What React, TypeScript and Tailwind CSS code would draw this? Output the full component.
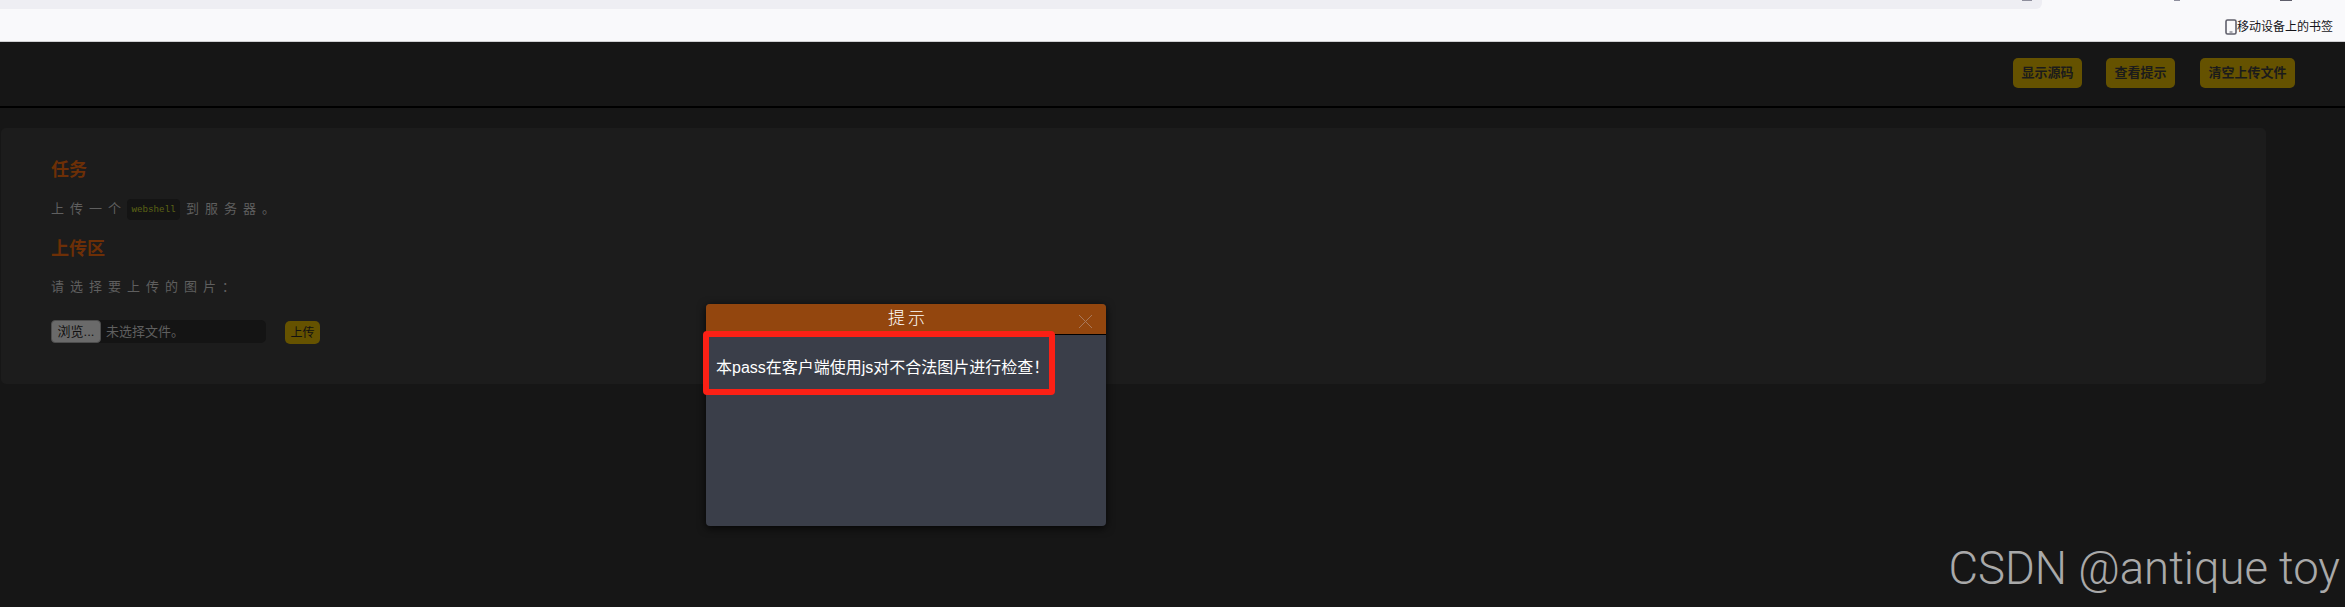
export default function App() {
  const sans = "font-['Liberation_Sans','Noto_Sans_CJK_SC',sans-serif]";

  return (
    <div className={`relative h-[607px] w-[2345px] overflow-hidden bg-[#161616] ${sans}`}>
      {/* browser chrome */}
      <div className="relative h-[42px] border-b border-[#cfcfd2] bg-[#f9f9fb]">
        <div className="h-[9px] w-[2042px] rounded-br-md bg-[#eeeef3]" />
        {/* bottoms of the toolbar icons, cut off by the crop */}
        <span className="absolute top-0 left-[2022px] h-[1px] w-[10px] bg-[#8f8f9d]" />
        <span className="absolute top-0 left-[2174px] h-[1px] w-[6px] bg-[#8f8f9d]" />
        <span className="absolute top-0 left-[2280px] h-[1px] w-[12px] bg-[#5f5f6b]" />
        <div className="mt-[10px] flex h-[16px] items-center justify-end pr-[12px]">
          <svg width="12" height="16" viewBox="0 0 12 16" fill="none">
            <rect x="1" y="1" width="10" height="14" rx="1.5" stroke="#5f5f6b" strokeWidth="1.6" />
            <rect x="4.5" y="12.5" width="3" height="1" fill="#5f5f6b" />
          </svg>
          <span className="text-[12px] leading-[16px] text-[#15141a]">移动设备上的书签</span>
        </div>
      </div>

      {/* page header */}
      <div className="flex h-[66px] items-start justify-end border-b-2 border-black pt-[16px] pr-[50px]">
        <div className="flex gap-[24px]">
          <button className="h-[30px] w-[69px] rounded-[5px] bg-[#655200] text-[13px] font-bold text-[#1b1b1b]">显示源码</button>
          <button className="h-[30px] w-[69px] rounded-[5px] bg-[#655200] text-[13px] font-bold text-[#1b1b1b]">查看提示</button>
          <button className="ml-px h-[30px] w-[95px] rounded-[5px] bg-[#655200] text-[13px] font-bold text-[#1b1b1b]">清空上传文件</button>
        </div>
      </div>

      {/* task panel */}
      <div className="mt-[20px] ml-px h-[256px] w-[2265px] rounded-[5px] bg-[#1c1c1c] pt-[31px] pl-[50px]">
        <h2 className="text-[18px] leading-[22px] font-bold text-[#6d2f06]">任务</h2>
        <p className="mt-[17px] flex h-[22px] items-center text-[13px] tracking-[6px] text-[#5f5f5f]">
          上传一个
          <code className="mr-[6px] w-[53px] rounded-[4px] bg-[#141414] py-[2px] text-center font-['Liberation_Mono',monospace] text-[9.2px] leading-[17px] tracking-normal text-[#5d6414]">webshell</code>
          到服务器。
        </p>
        <h2 className="mt-[18px] text-[18px] leading-[22px] font-bold text-[#6d2f06]">上传区</h2>
        <p className="mt-[16px] h-[22px] text-[13px] leading-[22px] tracking-[6px] text-[#5f5f5f]">请选择要上传的图片：</p>
        <div className="mt-[22px] flex items-start">
          <div className="flex h-[23px] w-[215px] items-center rounded-[5px] bg-[#141414]">
            <span className="flex h-[23px] w-[50px] items-center justify-center rounded-[4px] border border-[#4d4d4d] bg-[#6a6a6a] text-[13px] text-[#111111]">浏览...</span>
            <span className="ml-[5px] text-[13px] text-[#5f5f5f]">未选择文件。</span>
          </div>
          <button className="mt-px ml-[19px] h-[23px] w-[35px] rounded-[5px] bg-[#655200] text-[12px] text-[#111111]">上传</button>
        </div>
      </div>

      {/* dialog */}
      <div className="absolute top-[304px] left-[706px] flex h-[222px] w-[400px] flex-col overflow-hidden rounded-[4px] bg-[#3a3e49] shadow-[0_2px_8px_rgba(0,0,0,0.8)]">
        <div className="relative flex h-[31px] items-center justify-center border-b border-black bg-[#93460e] pl-[4px] text-[17px] font-light tracking-[3px] text-white">
          提示
          <svg width="15" height="15" viewBox="0 0 15 15" className="absolute top-[10px] right-[13px]" stroke="#a9785a" strokeWidth="1" fill="none">
            <path d="M1 1l13 13M14 1L1 14" />
          </svg>
        </div>
        <p className="mt-[21px] ml-[10px] text-[16px] leading-[24px] text-white">本pass在客户端使用js对不合法图片进行检查！</p>
      </div>

      {/* red annotation box */}
      <div className="absolute top-[331px] left-[703px] h-[64px] w-[352px] rounded-[4px] border-[6px] border-[#fb2015]" />

      {/* watermark */}
      <div className="absolute top-[543px] right-[5px] font-['Roboto',sans-serif] text-[45.5px] leading-[52px] font-light text-[#a9a9a9]">CSDN @antique toy</div>
    </div>
  );
}
